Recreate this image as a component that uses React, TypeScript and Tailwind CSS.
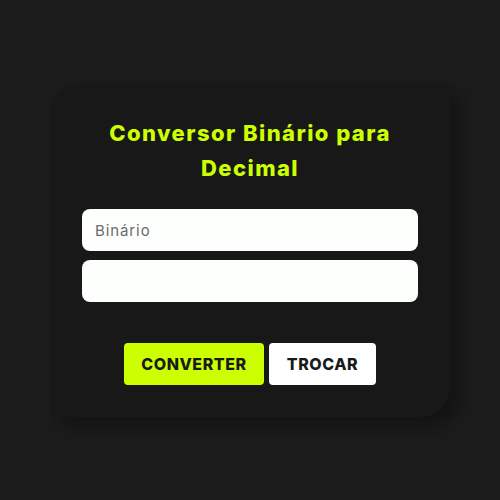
import React from "react";

export default function App() {
  return (
    <div
      className="min-h-screen w-full flex items-center justify-center bg-[#1c1c1c]"
      style={{ fontFamily: "Inter, 'Noto Sans', sans-serif" }}
    >
      <div className="w-[400px] bg-[#181818] rounded-tl-[30px] rounded-br-[30px] px-8 pt-[33px] pb-8 shadow-[10px_10px_20px_rgba(0,0,0,0.35)] flex flex-col">
        <h1 className="text-[22px] leading-[35px] font-extrabold tracking-[0.065em] text-[#ccff00] text-center px-2">
          Conversor Binário para Decimal
        </h1>
        <div className="mt-[23px] flex flex-col gap-[9px]">
          <input
            className="h-[42px] w-full rounded-lg bg-[#fdfffd] px-[13px] text-[15px] tracking-[0.06em] text-[#222] placeholder:text-[#6b6b6b] outline-none"
            placeholder="Binário"
          />
          <input
            className="h-[42px] w-full rounded-lg bg-[#fdfffd] px-[13px] text-[15px] tracking-[0.06em] text-[#222] outline-none"
          />
        </div>
        <div className="mt-[41px] flex justify-center gap-[5px]">
          <button className="h-[42px] w-[140px] rounded bg-[#ccff00] text-[16px] font-extrabold tracking-[0.035em] text-[#1a1a1a]">
            CONVERTER
          </button>
          <button className="h-[42px] w-[107px] rounded bg-white text-[16px] font-extrabold tracking-[0.035em] text-[#1a1a1a]">
            TROCAR
          </button>
        </div>
      </div>
    </div>
  );
}
